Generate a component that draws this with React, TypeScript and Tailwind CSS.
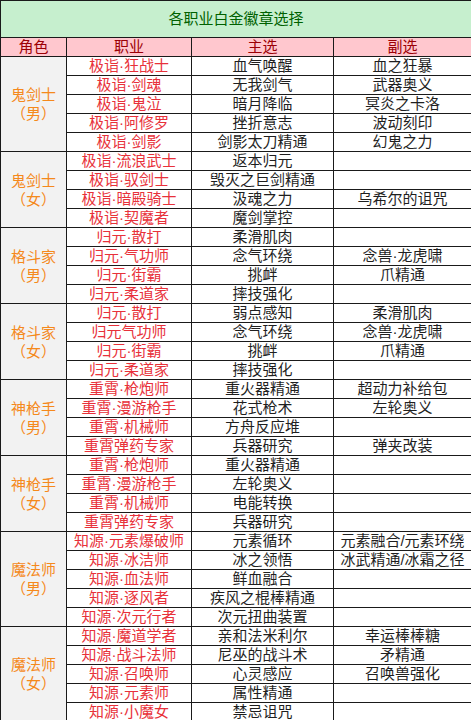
import React from "react";

type Row = [string, string, string];

interface Group {
  role: string;
  gender: string;
  rows: Row[];
}

const groups: Group[] = [
  {
    role: "鬼剑士",
    gender: "（男）",
    rows: [
      ["极诣·狂战士", "血气唤醒", "血之狂暴"],
      ["极诣·剑魂", "无我剑气", "武器奥义"],
      ["极诣·鬼泣", "暗月降临", "冥炎之卡洛"],
      ["极诣·阿修罗", "挫折意志", "波动刻印"],
      ["极诣·剑影", "剑影太刀精通", "幻鬼之力"],
    ],
  },
  {
    role: "鬼剑士",
    gender: "（女）",
    rows: [
      ["极诣·流浪武士", "返本归元", ""],
      ["极诣·驭剑士", "毁灭之巨剑精通", ""],
      ["极诣·暗殿骑士", "汲魂之力", "乌希尔的诅咒"],
      ["极诣·契魔者", "魔剑掌控", ""],
    ],
  },
  {
    role: "格斗家",
    gender: "（男）",
    rows: [
      ["归元·散打", "柔滑肌肉", ""],
      ["归元·气功师", "念气环绕", "念兽·龙虎啸"],
      ["归元·街霸", "挑衅", "爪精通"],
      ["归元·柔道家", "摔技强化", ""],
    ],
  },
  {
    role: "格斗家",
    gender: "（女）",
    rows: [
      ["归元·散打", "弱点感知", "柔滑肌肉"],
      ["归元气功师", "念气环绕", "念兽·龙虎啸"],
      ["归元·街霸", "挑衅", "爪精通"],
      ["归元·柔道家", "摔技强化", ""],
    ],
  },
  {
    role: "神枪手",
    gender: "（男）",
    rows: [
      ["重霄·枪炮师", "重火器精通", "超动力补给包"],
      ["重霄·漫游枪手", "花式枪术", "左轮奥义"],
      ["重霄·机械师", "方舟反应堆", ""],
      ["重霄弹药专家", "兵器研究", "弹夹改装"],
    ],
  },
  {
    role: "神枪手",
    gender: "（女）",
    rows: [
      ["重霄·枪炮师", "重火器精通", ""],
      ["重霄·漫游枪手", "左轮奥义", ""],
      ["重霄·机械师", "电能转换", ""],
      ["重霄弹药专家", "兵器研究", ""],
    ],
  },
  {
    role: "魔法师",
    gender: "（男）",
    rows: [
      ["知源·元素爆破师", "元素循环", "元素融合/元素环绕"],
      ["知源·冰洁师", "冰之领悟", "冰武精通/冰霜之径"],
      ["知源·血法师", "鲜血融合", ""],
      ["知源·逐风者", "疾风之棍棒精通", ""],
      ["知源·次元行者", "次元扭曲装置", ""],
    ],
  },
  {
    role: "魔法师",
    gender: "（女）",
    rows: [
      ["知源·魔道学者", "亲和法米利尔", "幸运棒棒糖"],
      ["知源·战斗法师", "尼巫的战斗术", "矛精通"],
      ["知源·召唤师", "心灵感应", "召唤兽强化"],
      ["知源·元素师", "属性精通", ""],
      ["知源·小魔女", "禁忌诅咒", ""],
    ],
  },
];

// Latin font first so the middle dot stays narrow, CJK glyphs fall through
const font = '"Liberation Sans", "Noto Sans CJK SC", sans-serif';

const cell = "border border-[#1a1a1a] p-0 h-[19px] text-center whitespace-nowrap leading-[18px]";

export default function App() {
  return (
    <div className="w-[471px] bg-white overflow-hidden text-[15px]" style={{ fontFamily: font }}>
      <table className="w-[471px] table-fixed border-collapse">
        <colgroup>
          <col className="w-[66px]" />
          <col className="w-[125px]" />
          <col className="w-[142px]" />
          <col className="w-[138px]" />
        </colgroup>
        <tbody>
          <tr>
            <td
              colSpan={4}
              className="border border-[#1a1a1a] p-0 h-[37px] bg-[#c6efce] text-center text-[#006100]"
            >
              各职业白金徽章选择
            </td>
          </tr>
          <tr className="bg-[#ffc7ce] text-[#9c0006]">
            <td className={cell}>角色</td>
            <td className={cell}>职业</td>
            <td className={cell}>主选</td>
            <td className={cell}>副选</td>
          </tr>
          {groups.map((g, gi) =>
            g.rows.map((r, ri) => (
              <tr key={`${gi}-${ri}`}>
                {ri === 0 && (
                  <td
                    rowSpan={g.rows.length}
                    className="border border-[#1a1a1a] p-0 bg-[#f2f2f2] text-center text-[#f5891c] leading-[19px]"
                  >
                    <div>{g.role}</div>
                    <div>{g.gender}</div>
                  </td>
                )}
                <td className={`${cell} text-[#e8313a]`}>{r[0]}</td>
                <td className={`${cell} text-[#1f1f1f]`}>{r[1]}</td>
                <td className={`${cell} text-[#1f1f1f]`}>{r[2]}</td>
              </tr>
            ))
          )}
        </tbody>
      </table>
    </div>
  );
}
